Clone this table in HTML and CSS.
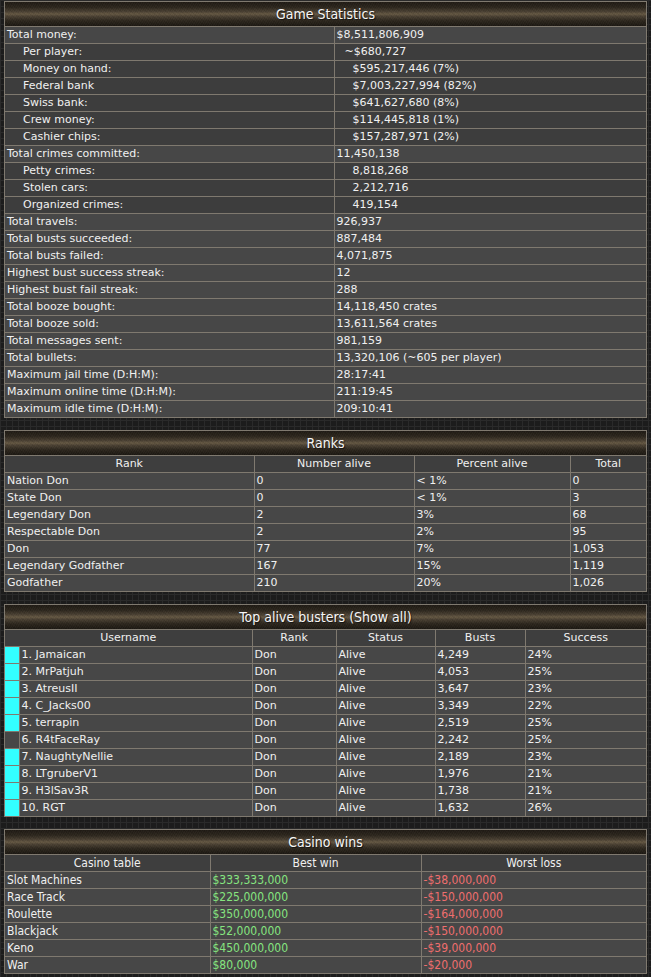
FILE: index.html
```html
<!DOCTYPE html>
<html>
<head>
<meta charset="utf-8">
<link rel="stylesheet" href="styles.css">
</head>
<body>
<div class="page">
  <section class="panel">
    <div class="panel-head">Game Statistics</div>
    <table class="grid stats">
      <colgroup><col class="c-label"><col></colgroup>
      <tr class="top"><td>Total money:</td><td>$8,511,806,909</td></tr>
      <tr class="sub"><td class="in">Per player:</td><td class="v1">~$680,727</td></tr>
      <tr class="sub"><td class="in">Money on hand:</td><td class="v2">$595,217,446 (7%)</td></tr>
      <tr class="sub"><td class="in">Federal bank</td><td class="v2">$7,003,227,994 (82%)</td></tr>
      <tr class="sub"><td class="in">Swiss bank:</td><td class="v2">$641,627,680 (8%)</td></tr>
      <tr class="sub"><td class="in">Crew money:</td><td class="v2">$114,445,818 (1%)</td></tr>
      <tr class="sub"><td class="in">Cashier chips:</td><td class="v2">$157,287,971 (2%)</td></tr>
      <tr class="top"><td>Total crimes committed:</td><td>11,450,138</td></tr>
      <tr class="sub"><td class="in">Petty crimes:</td><td class="v2">8,818,268</td></tr>
      <tr class="sub"><td class="in">Stolen cars:</td><td class="v2">2,212,716</td></tr>
      <tr class="sub"><td class="in">Organized crimes:</td><td class="v2">419,154</td></tr>
      <tr class="top"><td>Total travels:</td><td>926,937</td></tr>
      <tr class="top"><td>Total busts succeeded:</td><td>887,484</td></tr>
      <tr class="top"><td>Total busts failed:</td><td>4,071,875</td></tr>
      <tr class="top"><td>Highest bust success streak:</td><td>12</td></tr>
      <tr class="top"><td>Highest bust fail streak:</td><td>288</td></tr>
      <tr class="top"><td>Total booze bought:</td><td>14,118,450 crates</td></tr>
      <tr class="top"><td>Total booze sold:</td><td>13,611,564 crates</td></tr>
      <tr class="top"><td>Total messages sent:</td><td>981,159</td></tr>
      <tr class="top"><td>Total bullets:</td><td>13,320,106 (~605 per player)</td></tr>
      <tr class="top"><td>Maximum jail time (D:H:M):</td><td>28:17:41</td></tr>
      <tr class="top"><td>Maximum online time (D:H:M):</td><td>211:19:45</td></tr>
      <tr class="top"><td>Maximum idle time (D:H:M):</td><td>209:10:41</td></tr>
    </table>
  </section>

  <section class="panel">
    <div class="panel-head">Ranks</div>
    <table class="grid ranks">
      <colgroup><col class="r1"><col class="r2"><col class="r3"><col></colgroup>
      <tr class="hdr"><th>Rank</th><th>Number alive</th><th>Percent alive</th><th>Total</th></tr>
      <tr><td>Nation Don</td><td>0</td><td>&lt; 1%</td><td>0</td></tr>
      <tr><td>State Don</td><td>0</td><td>&lt; 1%</td><td>3</td></tr>
      <tr><td>Legendary Don</td><td>2</td><td>3%</td><td>68</td></tr>
      <tr><td>Respectable Don</td><td>2</td><td>2%</td><td>95</td></tr>
      <tr><td>Don</td><td>77</td><td>7%</td><td>1,053</td></tr>
      <tr><td>Legendary Godfather</td><td>167</td><td>15%</td><td>1,119</td></tr>
      <tr><td>Godfather</td><td>210</td><td>20%</td><td>1,026</td></tr>
    </table>
  </section>

  <section class="panel">
    <div class="panel-head">Top alive busters (Show all)</div>
    <table class="grid busters">
      <colgroup><col class="b0"><col class="b1"><col class="b2"><col class="b3"><col class="b4"><col></colgroup>
      <tr class="hdr"><th colspan="2">Username</th><th>Rank</th><th>Status</th><th>Busts</th><th>Success</th></tr>
      <tr><td class="mark on"></td><td>1. Jamaican</td><td>Don</td><td>Alive</td><td>4,249</td><td>24%</td></tr>
      <tr><td class="mark on"></td><td>2. MrPatjuh</td><td>Don</td><td>Alive</td><td>4,053</td><td>25%</td></tr>
      <tr><td class="mark on"></td><td>3. AtreusII</td><td>Don</td><td>Alive</td><td>3,647</td><td>23%</td></tr>
      <tr><td class="mark on"></td><td>4. C_Jacks00</td><td>Don</td><td>Alive</td><td>3,349</td><td>22%</td></tr>
      <tr><td class="mark on"></td><td>5. terrapin</td><td>Don</td><td>Alive</td><td>2,519</td><td>25%</td></tr>
      <tr><td class="mark"></td><td>6. R4tFaceRay</td><td>Don</td><td>Alive</td><td>2,242</td><td>25%</td></tr>
      <tr><td class="mark on"></td><td>7. NaughtyNellie</td><td>Don</td><td>Alive</td><td>2,189</td><td>23%</td></tr>
      <tr><td class="mark on"></td><td>8. LTgruberV1</td><td>Don</td><td>Alive</td><td>1,976</td><td>21%</td></tr>
      <tr><td class="mark on"></td><td>9. H3lSav3R</td><td>Don</td><td>Alive</td><td>1,738</td><td>21%</td></tr>
      <tr><td class="mark on"></td><td>10. RGT</td><td>Don</td><td>Alive</td><td>1,632</td><td>26%</td></tr>
    </table>
  </section>

  <section class="panel casino">
    <div class="panel-head">Casino wins</div>
    <table class="grid">
      <colgroup><col class="k1"><col class="k2"><col></colgroup>
      <tr class="hdr"><th>Casino table</th><th>Best win</th><th>Worst loss</th></tr>
      <tr><td>Slot Machines</td><td class="win">$333,333,000</td><td class="loss">-$38,000,000</td></tr>
      <tr><td>Race Track</td><td class="win">$225,000,000</td><td class="loss">-$150,000,000</td></tr>
      <tr><td>Roulette</td><td class="win">$350,000,000</td><td class="loss">-$164,000,000</td></tr>
      <tr><td>Blackjack</td><td class="win">$52,000,000</td><td class="loss">-$150,000,000</td></tr>
      <tr><td>Keno</td><td class="win">$450,000,000</td><td class="loss">-$39,000,000</td></tr>
      <tr><td>War</td><td class="win">$80,000</td><td class="loss">-$20,000</td></tr>
    </table>
  </section>
</div>
</body>
</html>
```
FILE: styles.css
```css
html, body {
  margin: 0;
  padding: 0;
}
body {
  background-color: #1c1c1c;
  background-image:
    repeating-linear-gradient(to right, #2a2a2a 0 1px, transparent 1px 6px),
    repeating-linear-gradient(to bottom, #2a2a2a 0 1px, transparent 1px 6px);
  font-family: "DejaVu Sans", Verdana, sans-serif;
  font-size: 11px;
  color: #f0f0f0;
  min-height: 977px;
}
.page {
  padding: 1px 4px 0 4px;
  display: flex;
  flex-direction: column;
  gap: 12px;
}
.panel {
  border: 1px solid #7f796f;
  background: #454545;
}
.panel-head {
  height: 24px;
  line-height: 25px;
  text-align: center;
  font-family: "DejaVu Sans Condensed", "DejaVu Sans", sans-serif;
  font-size: 14px;
  color: #f6f6f6;
  text-shadow: 1px 1px 1px #111;
  border-bottom: 1px solid #7f796f;
  background-color: #2c261e;
  background-image:
    repeating-linear-gradient(37deg, rgba(0,0,0,0.07) 0 1px, transparent 1px 3px),
    repeating-linear-gradient(-61deg, rgba(255,255,255,0.025) 0 1px, transparent 1px 2px),
    linear-gradient(to bottom, #1f1a14 0%, #2c261d 22%, #4a4032 40%, #655843 50%, #4a4032 60%, #2c261d 78%, #1c1812 100%);
}
.grid {
  width: 100%;
  border-collapse: collapse;
  table-layout: fixed;
}
.grid td, .grid th {
  border: 1px solid #7f796f;
  height: 16px;
  padding: 0 2px 0 2px;
  line-height: 16px;
  white-space: nowrap;
  overflow: hidden;
  text-align: left;
  font-weight: normal;
}
.grid tr:first-child td, .grid tr:first-child th { border-top: 0; }
.grid td:first-child, .grid th:first-child { border-left: 0; }
.grid td:last-child, .grid th:last-child { border-right: 0; }
.grid tr:last-child td { border-bottom: 0; }
.grid th {
  text-align: center;
  background: #3e3e3e;
}
.grid td { background: #474747; }

.c-label { width: 329px; }
.stats tr.sub td { background: #3d3d3d; }
.stats td.in { padding-left: 18px; }
.stats td.v1 { padding-left: 10px; }
.stats td.v2 { padding-left: 18px; }

.r1 { width: 249px; }
.r2 { width: 160px; }
.r3 { width: 156px; }

.b0 { width: 14px; }
.b1 { width: 233px; }
.b2 { width: 84px; }
.b3 { width: 99px; }
.b4 { width: 90px; }
.busters td.mark { padding: 0; }
.busters td.mark.on { background: #33ffff; }

.casino .grid td, .casino .grid th {
  font-family: "DejaVu Sans Condensed", "DejaVu Sans", sans-serif;
  font-size: 12px;
}
.k1 { width: 205px; }
.k2 { width: 211px; }
.casino td.win { color: #86e57f; }
.casino td.loss { color: #ef6e6e; }
```
